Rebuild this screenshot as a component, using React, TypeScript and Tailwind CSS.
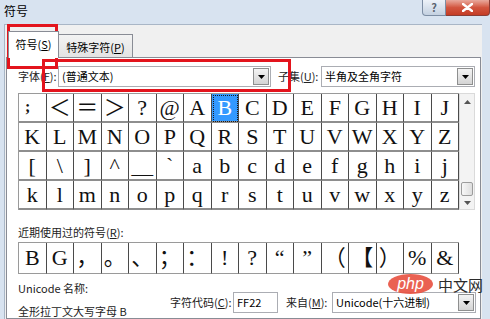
import React from "react";

const CJK = "font-['Microsoft_YaHei','Noto_Sans_CJK_SC',sans-serif]";
const SERIF = "font-['Liberation_Serif','Noto_Sans_CJK_SC',serif]";

const mainRows: string[][] = [
  [";", "＜", "＝", "＞", "?", "@", "A", "B", "C", "D", "E", "F", "G", "H", "I", "J"],
  ["K", "L", "M", "N", "O", "P", "Q", "R", "S", "T", "U", "V", "W", "X", "Y", "Z"],
  ["[", "\\", "]", "^", "＿", "`", "a", "b", "c", "d", "e", "f", "g", "h", "i", "j"],
  ["k", "l", "m", "n", "o", "p", "q", "r", "s", "t", "u", "v", "w", "x", "y", "z"],
];

const recent = ["B", "G", "，", "。", "、", "；", "：", "!", "?", "“", "”", "（", "【", "）", "%", "&"];

// small black triangle used by combo boxes and the scrollbar
const Tri = ({ up = false }: { up?: boolean }) => (
  <svg width="7" height="4" viewBox="0 0 7 4" className={up ? "rotate-180" : ""}>
    <path d="M0 0h7L3.5 4z" fill="currentColor" />
  </svg>
);

const Combo = ({ className, children }: { className: string; children: React.ReactNode }) => (
  <div className={`flex h-[21px] border border-[#abadb3] bg-white ${className}`}>
    <span className="flex-1 truncate pl-[3px] leading-[19px]">{children}</span>
    <span className="m-px flex w-[16px] items-center justify-center border border-[#8e8f8f] bg-gradient-to-b from-[#f4f4f4] to-[#d4d4d4] text-black">
      <Tri />
    </span>
  </div>
);

const App = () => {
  return (
    <div className={`relative flex h-[319px] w-[490px] flex-col overflow-hidden bg-[#d8e3f0] text-[11px] text-black ${CJK}`}>
      {/* Title bar */}
      <div className="flex h-[24px] items-start justify-between">
        <span className="pl-[4px] pt-[4px] text-[12px] leading-[14px]">符号</span>
        <div className="flex">
          <div className="flex h-[16px] w-[24px] items-center justify-center rounded-bl-[4px] border border-t-0 border-[#7d8ea4] bg-gradient-to-b from-[#edf2f8] to-[#c4d1e1] text-[11px] font-bold leading-none text-[#5b6470]">
            ?
          </div>
          <div className="flex h-[16px] w-[44px] items-center justify-center rounded-br-[4px] border border-l-0 border-t-0 border-[#8a3d35] bg-gradient-to-b from-[#e8a99d] via-[#d2553f] to-[#c43c24] text-white">
            <svg width="11" height="9" viewBox="0 0 11 9">
              <path d="M1 1l9 7M10 1L1 8" stroke="#fff" strokeWidth="2.4" strokeLinecap="round" />
            </svg>
          </div>
        </div>
      </div>

      {/* Client area */}
      <div className="ml-[4px] mr-[8px] flex flex-1 flex-col border-l border-t border-[#a9b6c6] bg-[#f0f0f0] pl-px">
        {/* Tabs */}
        <div className="flex h-[32px] items-end pl-[2px]">
          <div className="relative z-10 -mb-px flex h-[27px] w-[51px] items-center justify-center border border-b-0 border-[#898c95] bg-white pb-[1px]">
            符号(<span className="underline">S</span>)
          </div>
          <div className="flex h-[23px] w-[74px] items-center justify-center border border-b-0 border-l-0 border-[#898c95] bg-gradient-to-b from-[#f3f3f3] to-[#e3e3e3] pt-[2px]">
            特殊字符(<span className="underline">P</span>)
          </div>
        </div>

        {/* Panel */}
        <div className="mr-[1px] flex flex-1 flex-col border border-[#898c95] bg-white pl-[11px] pt-[8px]">
          {/* Font row */}
          <div className="flex h-[21px] items-center">
            <span className="w-[40px] text-[#222]">
              字体(<span className="underline">F</span>):
            </span>
            <Combo className="w-[213px]">(普通文本)</Combo>
            <span className="ml-[7px] w-[43px] text-[#222]">
              子集(<span className="underline">U</span>):
            </span>
            <Combo className="w-[154px]">半角及全角字符</Combo>
          </div>

          {/* Character grid + scrollbar */}
          <div className="mt-[6px] flex">
            <div className="grid w-[441px] grid-cols-16 border-l border-t border-[#9a9a9a]">
              {mainRows.flatMap((row, r) =>
                row.map((ch, c) => {
                  const sel = r === 0 && c === 7;
                  const semi = r === 0 && c === 0;
                  return (
                    <div
                      key={`${r}-${c}`}
                      className={`flex h-[29px] border-b-2 border-r border-b-[#8e8e8e] border-r-[#4a4a4a] leading-none ${SERIF} ${
                        semi ? "items-end justify-start pb-[6px] pl-[6px] text-[16px] font-bold" : "items-center justify-center text-[22px]"
                      } ${sel ? "bg-[#3399ff] text-white outline-1 -outline-offset-2 outline-dotted outline-[#1a1a1a]" : "text-[#111]"}`}
                    >
                      {ch}
                    </div>
                  );
                })
              )}
            </div>
            <div className="flex h-[117px] w-[16px] flex-col border border-[#dadada] bg-[#f3f3f3] text-[#555]">
              <div className="flex h-[16px] items-center justify-center">
                <Tri up />
              </div>
              <div className="flex-1" />
              <div className="mx-px h-[14px] rounded-[2px] border border-[#9c9c9c] bg-gradient-to-r from-[#f7f7f7] to-[#dedede]" />
              <div className="flex h-[13px] items-center justify-center">
                <Tri />
              </div>
            </div>
          </div>

          {/* Recently used */}
          <div className="mt-[15px] h-[14px] leading-[14px] text-[#222]">
            近期使用过的符号(<span className="underline">R</span>):
          </div>
          <div className="mt-[3px] grid w-[441px] grid-cols-16 border-l border-t border-[#9a9a9a]">
            {recent.map((ch, i) => (
              <div
                key={i}
                className={`flex h-[31px] items-center justify-center border-b border-r border-b-[#9a9a9a] border-r-[#4a4a4a] text-[22px] leading-none text-[#111] ${SERIF}`}
              >
                {ch}
              </div>
            ))}
          </div>

          {/* Bottom info */}
          <div className="flex">
            <div className="flex w-[152px] flex-col">
              <span className="mt-[7px] h-[14px] leading-[14px] text-[#222]">Unicode 名称:</span>
              <span className="mt-[9px] h-[14px] leading-[14px] text-[#222]">全形拉丁文大写字母 B</span>
            </div>
            <div className="mt-[18px] flex h-[21px] items-center">
              <span className="w-[63px] text-[#222]">
                字符代码(<span className="underline">C</span>):
              </span>
              <div className="flex h-[21px] w-[45px] items-center border border-[#abadb3] bg-white pl-[3px]">FF22</div>
              <span className="ml-[8px] w-[46px] text-[#222]">
                来自(<span className="underline">M</span>):
              </span>
              <Combo className="w-[144px]">Unicode(十六进制)</Combo>
            </div>
          </div>
        </div>
      </div>

      {/* Annotation boxes */}
      <div className="absolute left-[7px] top-[24px] h-[45px] w-[51px] border-[3px] border-[#e3141d]" />
      <div className="absolute left-[42px] top-[59px] h-[33px] w-[249px] border-[3px] border-[#e3141d]" />

      {/* Watermark */}
      <div className="absolute left-[388px] top-[274px] flex items-center">
        <div className="flex h-[20px] w-[45px] items-center justify-center rounded-[50%] bg-[#e8503f]/90 font-['Liberation_Sans',sans-serif] text-[16px] italic leading-none text-white">
          php
        </div>
        <span className="ml-[5px] text-[15px] leading-none text-[#2b2b2b]">中文网</span>
      </div>
    </div>
  );
};

export default App;
